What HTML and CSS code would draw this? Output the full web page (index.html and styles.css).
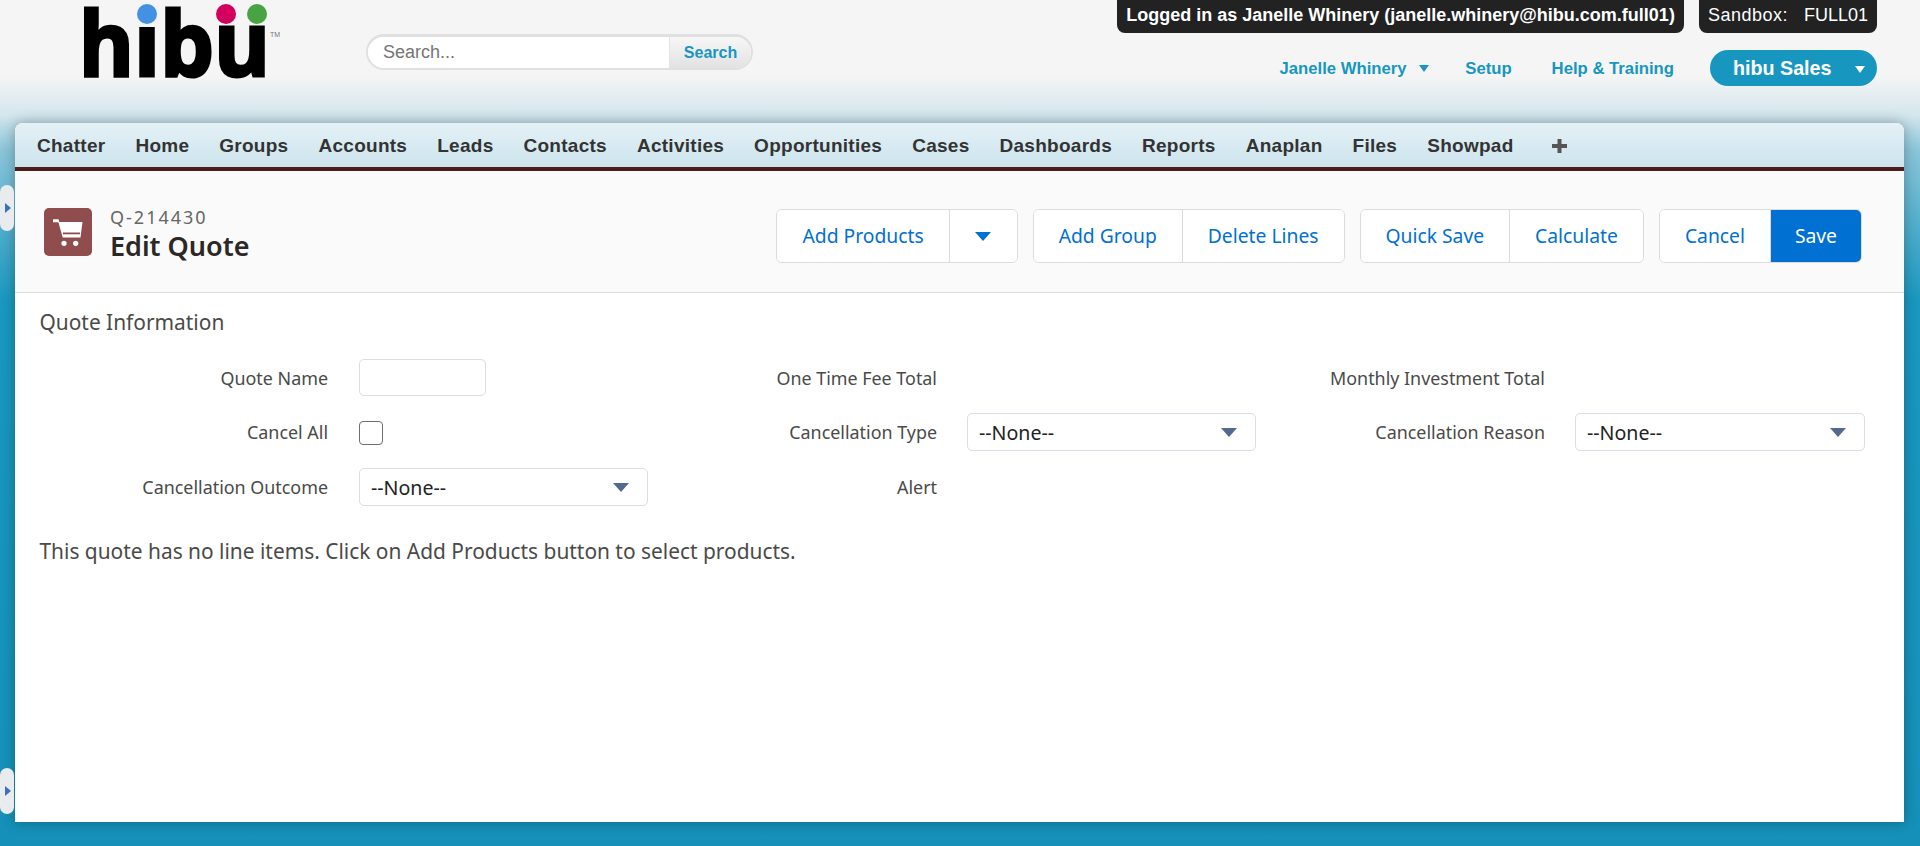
FILE: index.html
```html
<!DOCTYPE html>
<html lang="en">
<head>
    <meta charset="UTF-8">
    <title>Edit Quote</title>
    <link rel="stylesheet" href="styles.css">
</head>
<body>

    <header class="topbar">
        <div class="logo">
            <svg width="200" height="84" viewBox="0 0 200 84">
                <text transform="translate(-6 76) scale(.947 1)" class="logo-text">hibu</text>
                <rect x="52" y="0" width="24" height="27" fill="#f5f5f5"/>
                <circle cx="63" cy="14" r="10" fill="#4490e2"/>
                <circle cx="142" cy="14" r="10" fill="#d3005f"/>
                <circle cx="173" cy="14" r="10" fill="#4aa343"/>
                <text x="186" y="37" class="logo-tm">TM</text>
            </svg>
        </div>
        <form class="search">
            <input class="search-input" type="text" placeholder="Search...">
            <button class="search-btn" type="button">Search</button>
        </form>
        <div class="user-area">
            <div class="badges">
                <div class="badge badge-user">Logged in as Janelle Whinery (janelle.whinery@hibu.com.full01)</div>
                <div class="badge badge-sandbox"><span class="sandbox-label">Sandbox:</span><span>FULL01</span></div>
            </div>
            <div class="links">
                <a class="link link-user">Janelle Whinery <i class="caret"></i></a>
                <a class="link">Setup</a>
                <a class="link">Help &amp; Training</a>
                <div class="app-pill">hibu Sales <i class="caret caret-white"></i></div>
            </div>
        </div>
    </header>

    <main class="card">
        <nav class="tabs">
            <a>Chatter</a>
            <a>Home</a>
            <a>Groups</a>
            <a>Accounts</a>
            <a>Leads</a>
            <a>Contacts</a>
            <a>Activities</a>
            <a>Opportunities</a>
            <a>Cases</a>
            <a>Dashboards</a>
            <a>Reports</a>
            <a>Anaplan</a>
            <a>Files</a>
            <a>Showpad</a>
            <a class="tab-plus">
                <svg width="15" height="14" viewBox="0 0 15 14"><path d="M5.500 0h4v5H15v4H9.500v5h-4V9H0V5h5.500z" fill="#555"/></svg>
            </a>
        </nav>

        <section class="page-head">
            <div class="page-icon">
                <svg width="32" height="32" viewBox="0 0 32 32">
                    <path d="M1 3.200h5.500l.8 2.800h23.200l-2 15.500H10.700L6.400 6.300H1z" fill="#fff"/>
                    <rect x="11" y="16.500" width="17" height="1.800" fill="#8f4d4d"/>
                    <circle cx="12" cy="27.300" r="2.600" fill="#fff"/>
                    <circle cx="23.700" cy="27.300" r="2.600" fill="#fff"/>
                </svg>
            </div>
            <div class="page-title">
                <div class="page-sub">Q-214430</div>
                <h1>Edit Quote</h1>
            </div>
            <div class="actions">
                <div class="btn-group">
                    <button class="btn">Add Products</button>
                    <button class="btn btn-arrow"><i class="caret caret-blue"></i></button>
                </div>
                <div class="btn-group">
                    <button class="btn">Add Group</button>
                    <button class="btn">Delete Lines</button>
                </div>
                <div class="btn-group">
                    <button class="btn">Quick Save</button>
                    <button class="btn">Calculate</button>
                </div>
                <div class="btn-group">
                    <button class="btn">Cancel</button>
                    <button class="btn btn-primary">Save</button>
                </div>
            </div>
        </section>

        <section class="content">
            <h2>Quote Information</h2>
            <div class="form-grid">
                <label>Quote Name</label>
                <div class="field field-left"><input class="text-input" type="text"></div>
                <label>One Time Fee Total</label>
                <div class="field"></div>
                <label>Monthly Investment Total</label>
                <div class="field"></div>

                <label>Cancel All</label>
                <div class="field field-left"><span class="checkbox"></span></div>
                <label>Cancellation Type</label>
                <div class="field"><div class="select">--None--<i class="caret caret-slate"></i></div></div>
                <label>Cancellation Reason</label>
                <div class="field"><div class="select">--None--<i class="caret caret-slate"></i></div></div>

                <label>Cancellation Outcome</label>
                <div class="field field-left"><div class="select">--None--<i class="caret caret-slate"></i></div></div>
                <label>Alert</label>
                <div class="field"></div>
                <span></span>
                <span></span>
            </div>
            <p class="empty">This quote has no line items. Click on Add Products button to select products.</p>
        </section>
    </main>

    <div class="handle handle-top"><i></i></div>
    <div class="handle handle-bottom"><i></i></div>

</body>
</html>
```

FILE: styles.css
```css
* {
    box-sizing: border-box;
}

html, body {
    height: 846px;
    overflow: hidden;
}

body {
    margin: 0;
    position: relative;
    font-family: "Liberation Sans", Arial, sans-serif;
    background: linear-gradient(#f5f5f5 0, #f5f5f5 75px, #d4e6ed 115px, #8ac6da 150px, #1a98c0 300px, #1590b9 846px);
}

/* top bar */
.topbar {
    height: 123px;
    display: flex;
    align-items: flex-start;
}

.logo {
    width: 366px;
    padding-left: 84px;
}

.logo-text {
    font-family: "Open Sans", sans-serif;
    font-weight: 700;
    font-size: 90px;
    fill: #000;
    stroke: #000;
    stroke-width: 3px;
}

.logo-tm {
    font-size: 7px;
    fill: #777;
}

.search {
    display: flex;
    width: 387px;
    height: 36px;
    margin-top: 34px;
    border: 2px solid #e0e0e0;
    border-top-width: 3px;
    border-radius: 18px;
    overflow: hidden;
    background: #fff;
}

.search-input {
    flex: 1;
    min-width: 0;
    border: none;
    outline: none;
    padding: 0 0 0 15px;
    font-family: "Liberation Sans", Arial, sans-serif;
    font-size: 18px;
}

.search-btn {
    width: 82px;
    padding: 0;
    border: none;
    border-left: 1px solid #e3e3e3;
    background: linear-gradient(#f7f7f7, #e2e2e2);
    color: #1797c0;
    font-family: "Liberation Sans", Arial, sans-serif;
    font-size: 16px;
    font-weight: bold;
}

.user-area {
    margin-left: auto;
    padding-right: 43px;
    display: flex;
    flex-direction: column;
    align-items: flex-end;
}

.badges {
    display: flex;
    gap: 15px;
}

.badge {
    height: 33px;
    background: #222;
    color: #fff;
    font-size: 18px;
    line-height: 31px;
    border-radius: 0 0 8px 8px;
    padding: 0 9px;
    white-space: nowrap;
}

.badge-user {
    font-weight: bold;
}

.badge-sandbox {
    display: flex;
    gap: 16px;
}

.sandbox-label {
    letter-spacing: .5px;
}

.links {
    display: flex;
    align-items: center;
    margin-top: 17px;
}

.link {
    padding-top: 2px;
    color: #1797c0;
    font-size: 16.700px;
    font-weight: bold;
    margin-left: 40px;
    white-space: nowrap;
}

.link-user {
    margin-right: -4px;
}

.caret {
    display: inline-block;
    width: 0;
    height: 0;
    border-left: 5.500px solid transparent;
    border-right: 5.500px solid transparent;
    border-top: 7px solid #1797c0;
    margin-left: 8px;
    vertical-align: 2px;
}

.app-pill {
    width: 167px;
    height: 36px;
    margin-left: 36px;
    padding-left: 23px;
    border-radius: 18px;
    background: #1797c0;
    color: #fff;
    font-size: 19.700px;
    font-weight: bold;
    line-height: 36px;
    white-space: nowrap;
}

.caret-white {
    border-top-color: #fff;
    margin-left: 18px;
}

/* main card */
.card {
    width: 1889px;
    height: 699px;
    margin-left: 15px;
    background: #fff;
    border-radius: 8px 8px 0 0;
    box-shadow: 0 0 14px rgba(0, 0, 0, .3);
    overflow: hidden;
}

.tabs {
    height: 48px;
    display: flex;
    align-items: center;
    padding: 2px 7px 0;
    background: linear-gradient(#e4f1f6, #cde4ed);
    border-bottom: 4px solid #4a1c1c;
}

.tabs a {
    padding: 0 15px;
    color: #333;
    font-size: 19px;
    font-weight: bold;
    letter-spacing: .27px;
}

.tabs .tab-plus {
    margin-left: 8px;
}

.tab-plus svg {
    display: block;
}

.page-head {
    height: 122px;
    display: flex;
    align-items: center;
    padding: 0 42px 0 29px;
    background: #fafafa;
    border-bottom: 1px solid #ddd;
}

.page-icon {
    width: 48px;
    height: 48px;
    display: flex;
    align-items: center;
    justify-content: center;
    background: #8f4d4d;
    border-radius: 5px;
}

.page-title {
    margin-left: 18px;
    margin-top: 4px;
}

.page-sub {
    color: #666;
    font-family: "Noto Sans", sans-serif;
    font-size: 18px;
    letter-spacing: 2px;
    line-height: 24px;
}

h1 {
    margin: 0;
    color: #2b2826;
    font-family: "Noto Sans", sans-serif;
    font-size: 27px;
    font-weight: 600;
    line-height: 34px;
}

.actions {
    margin-left: auto;
    margin-top: 8px;
    display: flex;
    gap: 15px;
}

.btn-group {
    display: flex;
    height: 54px;
    background: #fff;
    border: 1px solid #dddbda;
    border-radius: 6px;
    overflow: hidden;
}

.btn {
    padding: 0 25px;
    border: none;
    border-left: 1px solid #dddbda;
    background: #fff;
    color: #0070d2;
    font-family: "Noto Sans", sans-serif;
    font-size: 19.300px;
}

.btn:first-child {
    border-left: none;
}

.btn-arrow {
    width: 68px;
    padding: 0;
}

.caret-blue {
    border-left-width: 8px;
    border-right-width: 8px;
    border-top: 9px solid #0070d2;
    margin: 0;
}

.btn-primary {
    padding: 0 24px;
    background: #0070d2;
    color: #fff;
}

.content {
    padding: 16px 0 0 24.500px;
    color: #4a4a48;
    font-family: "Noto Sans", sans-serif;
}

h2 {
    margin: 0;
    font-size: 20.900px;
    font-weight: 400;
    line-height: 26px;
}

.form-grid {
    margin-left: -24.500px;
    margin-top: 24px;
    display: grid;
    grid-template-columns: 313px 320px 289px 319px 289px 320px;
    grid-template-rows: 37px 38px 38px;
    row-gap: 17px;
    align-items: center;
}

.form-grid label {
    text-align: right;
    font-size: 17.900px;
}

.field {
    padding-left: 30px;
}

.field-left {
    padding-left: 31px;
}

.text-input {
    display: block;
    width: 127px;
    height: 37px;
    border: 1px solid #dddbe6;
    border-radius: 5px;
}

.checkbox {
    display: block;
    width: 24px;
    height: 24px;
    margin-top: 1px;
    border: 1px solid #706e6b;
    border-radius: 4px;
}

.select {
    height: 38px;
    display: flex;
    align-items: center;
    justify-content: space-between;
    padding: 0 18px 0 11px;
    border: 1px solid #dddbe6;
    border-radius: 5px;
    background: #fff;
    color: #222;
    font-size: 19.600px;
}

.caret-slate {
    border-left-width: 8px;
    border-right-width: 8px;
    border-top: 9px solid #54698d;
    margin: 0;
}

.empty {
    margin: 32px 0 0;
    font-size: 20.900px;
    line-height: 26px;
}

/* side handles */
.handle {
    position: absolute;
    left: 0;
    width: 14px;
    height: 46px;
    background: #e9ecef;
    border-radius: 7px;
    display: flex;
    align-items: center;
    padding-left: 5px;
}

.handle i {
    border-top: 5px solid transparent;
    border-bottom: 5px solid transparent;
    border-left: 6px solid #3d6fc0;
}

.handle-top {
    top: 185px;
}

.handle-bottom {
    top: 768px;
}
```
